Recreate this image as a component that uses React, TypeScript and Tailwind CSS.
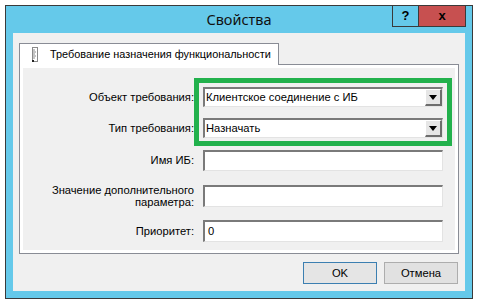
import React from "react";

const ui = { fontFamily: '"Liberation Sans", Arial, sans-serif' };

function Combo({ value }: { value: string }) {
  return (
    <div className="flex h-[20px] w-[240px] border-t-2 border-l-2 border-b border-r border-t-[#7a7a7a] border-l-[#7a7a7a] border-b-[#e3e3e3] border-r-[#e3e3e3] bg-white">
      <div className="flex-1 pl-[1px] text-[11.2px] leading-[17px] text-black">{value}</div>
      <div className="flex h-[17px] w-[17px] items-center justify-center border-t border-l border-b-2 border-r-2 border-t-white border-l-white border-b-[#6d6d6d] border-r-[#6d6d6d] bg-[#e6e6e6]">
        <svg width="8" height="5" viewBox="0 0 8 5">
          <path d="M0 0H8L4 5Z" fill="#000" />
        </svg>
      </div>
    </div>
  );
}

function Field({ value, h }: { value?: string; h: string }) {
  return (
    <div
      className={`${h} w-[240px] border-t-2 border-l-2 border-b border-r border-t-[#7a7a7a] border-l-[#7a7a7a] border-b-[#e3e3e3] border-r-[#e3e3e3] bg-white pl-[3px] text-[11.2px] leading-[18px] text-black`}
    >
      {value}
    </div>
  );
}

export default function App() {
  return (
    <div className="h-[303px] w-[477px] bg-white p-[5px]" style={ui}>
      <div className="relative flex h-[294px] w-[468px] flex-col border border-[#3a3a3a] bg-[#65c9ea]">
        <div
          className="flex h-[27px] items-center justify-center pt-[1px] text-[14.5px] text-[#111]"
          style={{ fontFamily: '"Noto Sans", "Open Sans", sans-serif' }}
        >
          Свойства
        </div>
        <div className="absolute right-[6px] top-[-1px] flex h-[22px] border border-[#3a3a3a]">
          <div className="flex w-[26px] items-center justify-center border-r border-[#3a3a3a] text-[13px] font-bold text-black">
            ?
          </div>
          <div className="flex w-[46px] items-center justify-center bg-[#c75050] text-[13px] font-bold text-black">
            x
          </div>
        </div>

        <div className="mx-[7px] flex h-[258px] flex-col bg-[#f0f0f0] px-[6px] pt-[10px]">
          <div className="relative z-10 mb-[-1px] flex h-[22px] w-[260px] items-center border-l border-r border-t border-[#898c95] bg-white">
            <svg width="6" height="15" viewBox="0 0 6 15" className="ml-[12px] shrink-0">
              <rect x="0.5" y="0.5" width="5" height="14" fill="#fff" stroke="#8a8a8a" />
              <path d="M1 3H3M1 5H4M1 7H3M1 9H4M1 11H3" stroke="#8a8a8a" strokeWidth="1" />
              <rect x="0" y="13" width="2" height="2" fill="#222" />
            </svg>
            <span className="ml-[12px] whitespace-nowrap text-[10.9px] text-black">
              Требование назначения функциональности
            </span>
          </div>
          <div className="h-[190px] w-[440px] border border-[#898c95] bg-white p-[3px]">
            <div className="relative flex h-full flex-col bg-[#f0f0f0] pt-[19px] text-[11.2px] text-black">
              <div className="absolute left-[171px] top-[10px] h-[68px] w-[258px] border-[5px] border-[#22b14c]" />
              <div className="flex items-center">
                <div className="w-[171px] whitespace-nowrap text-right">Объект требования:</div>
                <div className="ml-[9px]">
                  <Combo value="Клиентское соединение с ИБ" />
                </div>
              </div>
              <div className="mt-[11px] flex items-center">
                <div className="w-[171px] whitespace-nowrap text-right">Тип требования:</div>
                <div className="ml-[9px]">
                  <Combo value="Назначать" />
                </div>
              </div>
              <div className="mt-[12px] flex items-center">
                <div className="w-[171px] whitespace-nowrap text-right">Имя ИБ:</div>
                <div className="ml-[9px]">
                  <Field h="h-[21px]" />
                </div>
              </div>
              <div className="mt-[13px] flex items-center">
                <div className="w-[171px] whitespace-nowrap text-right leading-[12px]">
                  Значение дополнительного
                  <br />
                  параметра:
                </div>
                <div className="ml-[9px]">
                  <Field h="h-[22px]" />
                </div>
              </div>
              <div className="mt-[12px] flex items-center">
                <div className="w-[171px] whitespace-nowrap text-right">Приоритет:</div>
                <div className="ml-[9px]">
                  <Field h="h-[22px]" value="0" />
                </div>
              </div>
            </div>
          </div>
          <div className="mr-[1px] mt-[8px] flex justify-end gap-[7px]">
            <div className="flex h-[22px] w-[74px] items-center justify-center border border-[#3c7fb1] bg-[#e5e5e5] text-[11.2px] text-black">
              OK
            </div>
            <div className="flex h-[22px] w-[74px] items-center justify-center border border-[#adadad] bg-[#e1e1e1] text-[11.2px] text-black">
              Отмена
            </div>
          </div>
        </div>
      </div>
    </div>
  );
}
